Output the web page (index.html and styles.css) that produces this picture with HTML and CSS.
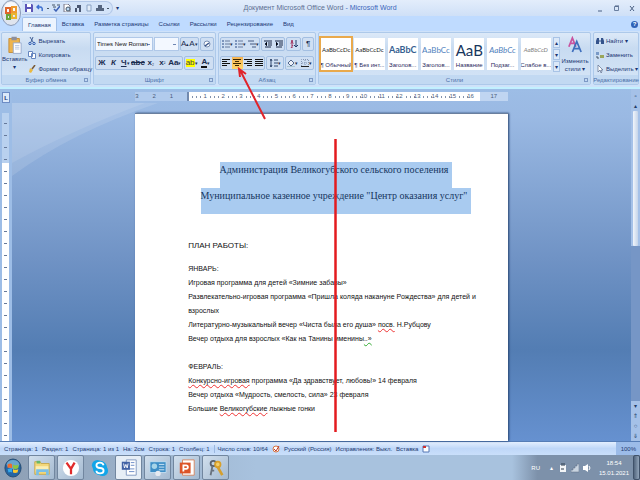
FILE: index.html
```
<!DOCTYPE html>
<html lang="ru">
<head>
<meta charset="utf-8">
<title>Документ Microsoft Office Word</title>
<link rel="stylesheet" href="styles.css">
</head>
<body>
<header class="titlebar">
  <div class="quick">
    <button aria-label="Сохранить"><svg viewBox="0 0 8 8"><path fill="#5b55b8" d="M0 0h7l1 1v7H0z"/><path fill="#fff" d="M2 0h4v3H2zM2 5h4v3H2z"/></svg></button>
    <button aria-label="Отменить"><svg viewBox="0 0 8 8"><path d="M1 3h3q3 0 2 4M3 1 1 3l2 2" fill="none" stroke="#3c6fd0" stroke-width="1.5"/></svg></button>
    <i class="dot"></i>
    <button aria-label="Орфография"><svg viewBox="0 0 8 8"><path d="M0 1h3M1 3h3M5 1h3" stroke="#456" /><path d="m2 5 2 2 4-5" fill="none" stroke="#3d62b5" stroke-width="1.5"/></svg></button>
    <button aria-label="Просмотр"><svg viewBox="0 0 8 8"><path d="M1 0h4l2 2v6H1z" fill="#fff" stroke="#778"/><circle cx="5" cy="5" r="2" fill="#bcd8f4" stroke="#456"/></svg></button>
    <button aria-label="Найти"><svg viewBox="0 0 8 8"><path d="M1 4h2v4H1zM5 4h2v4H5zM3 1h4v3H3z" fill="#4a5772"/></svg></button>
    <button aria-label="Создать"><svg viewBox="0 0 8 8"><path d="M2 1h4v6H2z" fill="#e4edf8" stroke="#8ba3c4"/></svg></button>
    <button aria-label="Печать"><svg viewBox="0 0 8 8"><path d="M0 4h8v3H0zM2 1h4v3H2z" fill="#55657f"/></svg></button>
    <i class="dot"></i>
  </div>
  <span class="more">▾</span>
  <h1>Документ Microsoft Office Word <b>- Microsoft Word</b></h1>
  <div class="window">
    <button aria-label="Свернуть"><svg viewBox="0 0 8 8"><path d="M2 7h4" stroke="#4b6184"/></svg></button>
    <button aria-label="Восстановить"><svg viewBox="0 0 8 8"><path d="M2.5 2.5h4v4h-4z" fill="none" stroke="#6a7fa0"/><path d="M3 2h4" stroke="#4b6184"/></svg></button>
    <button aria-label="Закрыть"><svg viewBox="0 0 8 8"><path d="m2 2 4 5M6 2 2 7" stroke="#4b6184"/></svg></button>
  </div>
</header>
<button class="orb" aria-label="Кнопка Office"><svg viewBox="0 0 20 26"><ellipse cx="10" cy="13" rx="9.500" ry="12.500" fill="#dfe4ee" stroke="#8898b4"/><ellipse cx="10" cy="9" rx="7" ry="7" fill="#f8f9fc"/><path d="M5 8h4v5H5z" fill="none" stroke="#e0662c" stroke-width="2"/><path d="M11 7h4v5h-4z" fill="none" stroke="#ef9b30" stroke-width="2"/><path d="M6 15h3v4H6z" fill="none" stroke="#6ba63c" stroke-width="2"/><path d="M11 14h4v4h-4z" fill="none" stroke="#e9b52e" stroke-width="2"/></svg></button>
<nav class="tabs">
  <button class="on">Главная</button><button>Вставка</button><button>Разметка страницы</button><button>Ссылки</button><button>Рассылки</button><button>Рецензирование</button><button>Вид</button>
  <button class="help" aria-label="Справка">?</button>
</nav>
<section class="ribbon">
  <div class="group clip">
    <div class="body">
      <button class="paste"><svg viewBox="0 0 16 20"><path d="M1 2h12v16H1z" fill="#eeb44e" stroke="#c48a34"/><path d="M4 0h6v4H4z" fill="#8d8f9c"/><path d="M6 7h9v12H6z" fill="#fdfdff" stroke="#92a6ca"/><path d="M8 10h5M8 12h5M8 14h5" stroke="#b2c4e0"/></svg><span>Вставить</span><span>▾</span></button>
      <div class="list">
        <button><svg viewBox="0 0 8 8"><path d="m2 0 3 5M5 0 3 5" stroke="#45639a"/><circle cx="2" cy="6.500" r="1.200" fill="none" stroke="#2f5bb0"/><circle cx="6" cy="6.500" r="1.200" fill="none" stroke="#2f5bb0"/></svg>Вырезать</button>
        <button><svg viewBox="0 0 8 8"><path d="M.5.5h4v5h-4zM3.500 2.500h4v5h-4z" fill="#fff" stroke="#6585bf"/></svg>Копировать</button>
        <button><svg viewBox="0 0 8 8"><path d="m1 7 1-4 3 2-2 3z" fill="#eab93f"/><path d="m4 4 3-4" stroke="#7a5a35" stroke-width="1.500"/></svg>Формат по образцу</button>
      </div>
    </div>
    <footer>Буфер обмена<i></i></footer>
  </div>
  <div class="group font">
    <div class="body rows">
      <div class="row">
        <select class="face" aria-label="Шрифт"><option>Times New Roman</option></select>
        <select class="size" aria-label="Размер шрифта"><option></option></select>
        <div class="set"><button class="big">A<sup>▴</sup></button><button>A<sup>▾</sup></button></div>
        <div class="set"><button aria-label="Очистить формат"><svg viewBox="0 0 8 8"><circle cx="4" cy="4" r="3" fill="#fff" stroke="#7a8fb4"/><path d="m2 6 4-3" stroke="#39558b" stroke-width="1.500"/></svg></button></div>
      </div>
      <div class="row">
        <div class="set wide"><button><b>Ж</b></button><button><b><em>К</em></b></button><button><b><u>Ч</u></b><small>▾</small></button><button><b><s>abc</s></b></button><button><b>x</b><sub>₂</sub></button><button><b>x</b><sup>²</sup></button><button><b>Aa</b><small>▾</small></button></div>
        <div class="set marks"><button><span class="hl">ab</span><small>▾</small></button><button><b class="ink">A</b><small>▾</small></button></div>
      </div>
    </div>
    <footer>Шрифт<i></i></footer>
  </div>
  <div class="group para">
    <div class="body rows">
      <div class="row">
        <div class="set"><button aria-label="Маркеры"><svg viewBox="0 0 8 8"><path d="M0 1h2M0 4h2M0 7h2" stroke="#2b4a85"/><path d="M3 1h5M3 4h5M3 7h5" stroke="#667b9e"/></svg><small>▾</small></button><button aria-label="Нумерация"><svg viewBox="0 0 8 8"><path d="M1 0v2M1 3v2M1 6v2" stroke="#2b4a85"/><path d="M3 1h5M3 4h5M3 7h5" stroke="#667b9e"/></svg><small>▾</small></button><button aria-label="Многоуровневый список"><svg viewBox="0 0 8 8"><path d="M0 1h6M2 4h6M4 7h4" stroke="#465b82"/></svg><small>▾</small></button></div>
        <div class="set"><button aria-label="Уменьшить отступ"><svg viewBox="0 0 8 8"><path d="M0 1h8M4 3h4M4 5h4M1 7h6M3 2 1 4l2 2" stroke="#1c2b48"/></svg></button><button aria-label="Увеличить отступ"><svg viewBox="0 0 8 8"><path d="M0 1h8M4 3h4M4 5h4M1 7h6M1 2l2 2-2 2" stroke="#1c2b48"/></svg></button></div>
        <div class="set"><button aria-label="Сортировка"><svg viewBox="0 0 8 8"><path d="m1 4 1-4 1 4M1 5h2L1 8h2" fill="none" stroke="#a3325c"/><path d="M6 0v7M4 5l2 2 2-2" fill="none" stroke="#243b68"/></svg></button></div>
        <div class="set"><button>¶</button></div>
      </div>
      <div class="row">
        <div class="set aligns"><button aria-label="По левому краю"><svg viewBox="0 0 8 8"><path d="M0 .5h8M0 2.500h5M0 4.500h8M0 6.500h5" stroke="#111"/></svg></button><button class="active" aria-label="По центру"><svg viewBox="0 0 8 8"><path d="M0 .5h8M2 2.500h4M0 4.500h8M2 6.500h4" stroke="#3a2600"/></svg></button><button aria-label="По правому краю"><svg viewBox="0 0 8 8"><path d="M0 .5h8M3 2.500h5M0 4.500h8M3 6.500h5" stroke="#111"/></svg></button><button aria-label="По ширине"><svg viewBox="0 0 8 8"><path d="M0 .5h8M0 2.500h8M0 4.500h8M0 6.500h8" stroke="#111"/></svg></button></div>
        <div class="set"><button aria-label="Интервал"><svg viewBox="0 0 8 8"><path d="M1 0v8M0 2l1-2 1 2M0 6l1 2 1-2M4 1h4M4 4h4M4 7h4" fill="none" stroke="#33496f"/></svg><small>▾</small></button></div>
        <div class="set"><button aria-label="Заливка"><svg viewBox="0 0 8 8"><path d="m1 4 3-3 3 3-3 3z" fill="#eef2f9" stroke="#52678c"/><path d="M0 8h8" stroke="#8aa" /></svg><small>▾</small></button><button aria-label="Границы"><svg viewBox="0 0 8 8"><path d="M.5 7V.5h7V7M4 1v6M1 4h6" fill="none" stroke="#8496b5" stroke-dasharray="1"/><path d="M0 7.500h8" stroke="#222"/></svg><small>▾</small></button></div>
      </div>
    </div>
    <footer>Абзац<i></i></footer>
  </div>
  <div class="group styles">
    <div class="body">
      <div class="gallery">
        <button class="sel"><span class="t1">AaBbCcDc</span><span>¶ Обычный</span></button>
        <button><span class="t1">AaBbCcDc</span><span>¶ Без инт...</span></button>
        <button><span class="t3">AaBbC</span><span>Заголов...</span></button>
        <button><span class="t4">AaBbCc</span><span>Заголов...</span></button>
        <button><span class="t5">AaB</span><span>Название</span></button>
        <button><span class="t6">AaBbCc</span><span>Подзаг...</span></button>
        <button><span class="t7">AaBbCcD</span><span>Слабое в...</span></button>
      </div>
      <div class="scroll"><button aria-label="Вверх">▴</button><button aria-label="Вниз">▾</button><button aria-label="Ещё">▾</button></div>
      <button class="change"><svg viewBox="0 0 16 18"><path d="m1 11 4-10 4 10M3 7h5" fill="none" stroke="#c8539f" stroke-width="2"/><path d="m5 17 5-12 5 12M7 13h6" fill="none" stroke="#3f6fbd" stroke-width="2"/></svg><span>Изменить<br>стили ▾</span></button>
    </div>
    <footer>Стили<i></i></footer>
  </div>
  <div class="group edit">
    <div class="body list">
      <button><svg viewBox="0 0 8 8"><path d="M0 4 1 1h2v6H0zM5 1h2l1 3v3H5z" fill="#34538c"/><path d="M3 4h2" stroke="#34538c"/></svg>Найти ▾</button>
      <button><svg viewBox="0 0 8 8"><path d="M0 1h3v3H0z" fill="#799ac8"/><path d="M4 4h4v3H4z" fill="#9aa65b"/><path d="M1 5v2h2" fill="none" stroke="#456"/></svg>Заменить</button>
      <button><svg viewBox="0 0 8 8"><path d="M2 0v7l2-2 1 3 1-1-1-2h2z" fill="#fff" stroke="#5b6d8e" stroke-width=".7"/></svg>Выделить ▾</button>
    </div>
    <footer>Редактирование</footer>
  </div>
</section>
<main class="workspace">
  <svg class="swoosh" viewBox="0 0 640 352" preserveAspectRatio="none"><path d="M12 73Q70 30 158 0H12z" fill="#fff" opacity=".12"/><path d="M12 60Q70 28 145 0H12z" fill="#fff" opacity=".1"/></svg>
  <aside class="left"><button class="tabstop" aria-label="Табуляция">L</button><div class="vruler"></div></aside>
  <div class="desk">
    <div class="hruler">
      <div class="neg"><span>3</span><span>2</span><span>1</span></div>
      <div class="pos"><span>1</span><span>2</span><span>3</span><span>4</span><span>5</span><span>6</span><span>7</span><span>8</span><span>9</span><span>10</span><span>11</span><span>12</span><span>13</span><span>14</span><span>15</span><span>16</span></div>
      <div class="end"><span>17</span></div>
    </div>
    <article class="page">
      <h2><span>Администрация Великогубского сельского поселения</span></h2>
      <h2><span>Муниципальное казенное учреждение "Центр оказания услуг"</span></h2>
      <h3>ПЛАН РАБОТЫ:</h3>
      <p>ЯНВАРЬ:</p>
      <p>Игровая программа для детей «Зимние забавы»</p>
      <p>Развлекательно-игровая программа «Пришла коляда накануне Рождества» для детей и<br>взрослых</p>
      <p>Литературно-музыкальный вечер «Чиста была его душа» <u>посв.</u> Н.Рубцову</p>
      <p>Вечер отдыха для взрослых «Как на Танины именины<u class="gr">..»</u></p>
      <p class="gap">ФЕВРАЛЬ:</p>
      <p><u>Конкурсно-игровая</u> программа «Да здравствует, любовь!» 14 февраля</p>
      <p>Вечер отдыха «Мудрость, смелость, сила» 23 февраля</p>
      <p>Большие <u>Великогубские</u> лыжные гонки</p>
    </article>
  </div>
  <aside class="vscroll"><button aria-label="Линейка">▫</button><button aria-label="Вверх">▴</button><div class="thumb"></div><div class="track"></div><button aria-label="Вниз">▾</button><button aria-label="Предыдущая">⇑</button><button aria-label="Объект">○</button><button aria-label="Следующая">⇓</button></aside>
</main>
<div class="status">
  <span>Страница: 1</span><span>Раздел: 1</span><span>Страница: 1 из 1</span><span>На: 2см</span><span>Строка: 1</span><span>Столбец: 1</span><span class="bar">Число слов: 10/64</span>
  <svg viewBox="0 0 8 8"><circle cx="4" cy="4" r="3" fill="#fff" stroke="#d8743e"/><path d="m2 4 2 2 3-5" fill="none" stroke="#b8382c"/></svg>
  <span>Русский (Россия)</span><span>Исправления: Выкл.</span><span>Вставка</span>
  <svg viewBox="0 0 8 8"><path d="M1 1h6v6H1z" fill="#fff" stroke="#5576b4"/><path d="M1 1h3v2H1z" fill="#c33"/></svg>
  <span class="zoom">100%</span>
</div>
<footer class="taskbar">
  <button class="start" aria-label="Пуск"><svg viewBox="0 0 20 22"><ellipse cx="10" cy="11" rx="9" ry="10" fill="#2465a3" stroke="#25496e"/><ellipse cx="10" cy="7" rx="7" ry="5" fill="#68a5ce"/><path d="M4 7q3-2 5 0v4q-3-1-5 0z" fill="#ee6b2d"/><path d="M10 7q3 2 6 0v4q-3 2-6 0z" fill="#8dc63f"/><path d="M4 12q3-1 5 0v4q-2-1-4 0z" fill="#35a9ea"/><path d="M10 12q3 2 6 0l-1 4q-3 1-5 0z" fill="#fbc92f"/></svg></button>
  <button aria-label="Проводник"><svg viewBox="0 0 20 20"><path d="M2 3h6l1 2h9v12H2z" fill="#f3d779" stroke="#c5a64c"/><path d="M4 2h4v3H4z" fill="#67b768"/><path d="M3 8h14v6H3z" fill="#fbeeb3"/><path d="M5 18v-5h11v5" fill="none" stroke="#79bfe6" stroke-width="3"/></svg></button>
  <button aria-label="Яндекс Браузер"><svg viewBox="0 0 20 20"><circle cx="10" cy="10" r="9" fill="#fff"/><path d="m5 4 5 7 4-7M10 10v7" fill="none" stroke="#e02b2b" stroke-width="2.500"/></svg></button>
  <button class="flat" aria-label="Skype"><svg viewBox="0 0 20 20"><circle cx="7" cy="7" r="6" fill="#12a5e8"/><circle cx="13" cy="13" r="6" fill="#12a5e8"/><circle cx="10" cy="10" r="8" fill="#12a5e8"/><path d="M14 7q-1-3-4-3-4 0-4 3t4 3 4 3-4 3-4-3" fill="none" stroke="#fff" stroke-width="2"/></svg></button>
  <button class="cur" aria-label="Word"><svg viewBox="0 0 20 20"><path d="M7 1h11v17H7z" fill="#fff" stroke="#7c93bd"/><path d="M10 11h6M10 14h6M12 4h4M12 7h4" stroke="#6386c4"/><path d="M2 3h9v9H2z" fill="#4161a4"/><path d="m4 5 1 5 1.500-4L8 10l1-5" fill="none" stroke="#fff"/></svg></button>
  <button aria-label="Панель управления"><svg viewBox="0 0 20 20"><path d="M1 3h18v12H1z" fill="#3e8ec6" stroke="#c4dff1"/><circle cx="6" cy="8" r="3" fill="#a6d4e8"/><path d="M11 6h6M11 9h6M11 12h6" stroke="#d9ecf7"/><circle cx="10" cy="16" r="3" fill="#e6eaf0"/></svg></button>
  <button aria-label="PowerPoint"><svg viewBox="0 0 20 20"><path d="M5 1h13v17H5z" fill="#fff" stroke="#d5835c"/><path d="M2 4h12v12H2z" fill="#dc5428"/><path d="M6 14V7h3q2 0 2 2t-2 2H6" fill="none" stroke="#fff" stroke-width="2"/></svg></button>
  <button aria-label="Ключи"><svg viewBox="0 0 20 20"><circle cx="7" cy="5" r="3" fill="none" stroke="#59616d" stroke-width="2"/><path d="m6 8-2 10M5 13h3" stroke="#69727e" stroke-width="2"/><circle cx="12" cy="6" r="3" fill="#f3cf6c" stroke="#d8a02c" stroke-width="2"/><path d="m12 9 5 9" stroke="#d59f2e" stroke-width="3"/></svg></button>
  <div class="tray">
    <span>RU</span><span class="up">▴</span>
    <svg viewBox="0 0 8 10"><path d="M1 2h6v7H1z" fill="#f3f5f7"/><path d="M3 0v3M5 0v3M2 6h3" stroke="#2e3c4c"/></svg>
    <svg viewBox="0 0 8 10"><path d="M0 9V7h2V5h2V3h2V1h2v8z" fill="#c9d4e0" stroke="#5d6e84" stroke-width=".5"/></svg>
    <svg viewBox="0 0 8 10"><path d="M0 3h2l3-2v8L2 7H0z" fill="#fff"/><path d="M6 3q2 2 0 4" fill="none" stroke="#fff"/></svg>
    <time>18:54<br>15.01.2021</time>
  </div>
  <button class="show" aria-label="Показать рабочий стол"></button>
</footer>
<svg class="notes" viewBox="0 0 640 480"><path d="m265 119-25-49M240 77l-1-8 7 5" fill="none" stroke="#e0242b" stroke-width="2"/><path d="M335.500 139v293" stroke="#e31b1f" stroke-width="2.500"/></svg>
</body>
</html>
```
FILE: styles.css
```
* { box-sizing: border-box; }
body {
  margin: 0;
  min-height: 100vh;
  display: flex;
  flex-direction: column;
  position: relative;
  overflow: hidden;
  font: 6px/8px "Liberation Sans", sans-serif;
  color: #1a3672;
  background: #bfdbff;
}
button, select {
  font: inherit;
  color: inherit;
  border: 0;
  padding: 0;
  margin: 0;
  background: none;
  appearance: none;
  white-space: nowrap;
}
svg { display: block; width: 8px; height: 8px; flex: none; }
small, sup, sub { font-size: 5px; line-height: 4px; }

.titlebar {
  height: 16px;
  display: flex;
  align-items: center;
  padding: 0 4px 0 22px;
  background: linear-gradient(#e3edfb, #cfe0f7);
}
.quick {
  display: flex;
  align-items: center;
  gap: 3px;
  height: 14px;
  padding: 0 3px 0 3px;
  border: 1px solid #b3c8e8;
  border-left: 0;
  border-radius: 0 7px 7px 0;
  background: #d3e3f8;
}
.dot { width: 2px; height: 1px; background: #456; }
.more { margin-left: 3px; }
.titlebar h1 {
  flex: 1;
  margin: 0;
  padding-right: 75px;
  text-align: center;
  font-size: 7px;
  font-weight: 400;
  color: #5d6f92;
}
.titlebar b { font-weight: 400; color: #3a66bb; }
.window { display: flex; gap: 8px; }

.orb { position: absolute; left: 1px; top: 0; }
.orb svg { width: 20px; height: 26px; }

.tabs {
  height: 15px;
  display: flex;
  padding: 1px 2px 0 22px;
}
.tabs button { padding: 0 5px; }
.tabs .on {
  border: 1px solid #a3c0e8;
  border-bottom: 0;
  border-radius: 2px 2px 0 0;
  background: #ecf4fe;
}
.tabs .help {
  margin: 4px 0 0 auto;
  padding: 0;
  width: 7px;
  height: 7px;
  border-radius: 4px;
  font-weight: 700;
  line-height: 7px;
  color: #fff;
  background: #2e62b8;
}

.ribbon {
  height: 58px;
  display: flex;
  gap: 2px;
  padding: 1px 1px 2px;
  background: #cfe2f9;
  border-bottom: 2px solid #c2f0ff;
}
.group {
  display: flex;
  flex-direction: column;
  flex: none;
  min-width: 0;
  border: 1px solid #adc9ea;
  border-radius: 2px;
  background: linear-gradient(#dce9f8, #c8dbf1 30%, #d5e5f7);
}
.clip { width: 90px; }
.font { width: 123px; }
.para { width: 98px; }
.styles { flex: 1; }
.edit { width: 46px; }
.body { flex: 1; display: flex; min-height: 0; }
.group footer {
  height: 9px;
  display: flex;
  justify-content: center;
  align-items: center;
  position: relative;
  color: #4a6fa9;
  background: #c2d9f2;
}
.group footer i {
  position: absolute;
  right: 2px;
  width: 4px;
  height: 4px;
  border: 1px solid #7d99c5;
}
.paste, .change {
  display: flex;
  flex-direction: column;
  align-items: center;
  width: 26px;
  padding-top: 3px;
}
.paste svg { width: 14px; height: 19px; }
.list { display: flex; flex-direction: column; gap: 6px; padding: 4px 0 0 1px; }
.list button { display: flex; gap: 2px; align-items: center; }
.edit .list { padding-left: 2px; }

.rows { flex-direction: column; gap: 5px; padding: 4px 1px 0; }
.row { display: flex; height: 14px; gap: 1px; }
.face, .size {
  height: 14px;
  border: 1px solid #b0c8e8;
  padding: 0 1px;
  color: #111;
  background: linear-gradient(#6d86b3, #6d86b3) right 2px center / 3px 1px no-repeat, #f3f8ff;
}
.face { width: 58px; }
.size { width: 25px; }
.set {
  display: flex;
  flex: 1;
  justify-content: space-around;
  align-items: center;
  border: 1px solid #a3bfe2;
  border-radius: 2px;
  background: #cfdff3;
  color: #1b2d50;
  font-size: 8px;
}
.set button { display: flex; align-items: center; justify-content: center; flex: 1; height: 12px; }
.set.wide { flex: 3; }
.para .set { flex: auto; }
.para .set.aligns { flex: none; width: 45px; }
.para .active { background: linear-gradient(#f6b555, #ffd568); }
.hl { background: #ff0; color: #444; }
.ink { border-bottom: 2px solid #111; line-height: 8px; }

.gallery { display: flex; flex: 1; min-width: 0; gap: 3px; padding: 5px 2px 3px 2px; }
.gallery button {
  flex: 1 1 0;
  min-width: 0;
  overflow: hidden;
  display: flex;
  flex-direction: column;
  justify-content: space-between;
  align-items: center;
  height: 32px;
  padding: 4px 0 1px;
  color: #29295c;
  background: #fff;
}
.gallery .sel { outline: 2px solid #e9a94b; }
.gallery button span:first-child { height: 16px; line-height: 16px; font-family: Lato, sans-serif; }
.gallery .t1 { color: #222; }
.gallery .t3 { font-size: 9px; font-weight: 700; color: #365f91; }
.gallery .t4 { font-size: 8px; color: #4f81bd; }
.gallery .t5 { font-size: 15px; color: #17365d; }
.gallery .t6 { font-size: 8px; font-style: italic; color: #4f81bd; }
.gallery .t7 { font-size: 6px; font-style: italic; color: #808080; }
.scroll { display: flex; flex-direction: column; gap: 1px; padding: 4px 0 3px; }
.scroll button { flex: 1; width: 7px; border: 1px solid #a8c3e6; background: #dbe8f8; line-height: 6px; }
.change svg { width: 14px; height: 18px; margin-bottom: 3px; }
.change { width: 30px; }

.workspace {
  flex: 1;
  display: flex;
  position: relative;
  background: linear-gradient(#9dbde6, #9ab9e3 8%, #7093c5 48%, #537db3 74%, #6691d0);
}
.swoosh { position: absolute; inset: 14px 0 0; width: 100%; height: 100%; }
.left { width: 12px; position: relative; display: flex; flex-direction: column; gap: 10px; padding: 3px 2px 0; background: #9dbde6; }
.tabstop { height: 11px; border: 1px solid #6d8cc5; background: #dce9fa; font-weight: 700; line-height: 8px; }
.vruler {
  flex: 1;
  width: 7px;
  background:
    repeating-linear-gradient(transparent 0 10px, #66799a 10px 11px, transparent 11px 12px) center / 3px 100% no-repeat,
    linear-gradient(#b9d1ef 0 50px, #fff 50px);
}
.desk { flex: 1; position: relative; display: flex; flex-direction: column; align-items: center; }
.hruler {
  width: 60.2%;
  display: grid;
  grid-template-columns: minmax(0, 52fr) minmax(0, 293fr) minmax(0, 28fr);
  height: 9px;
  margin: 3px 0 12px;
  color: #4b5d7c;
  line-height: 9px;
}
.neg { display: flex; justify-content: space-between; padding-right: 14px; background: #b1cbed; }
.pos { display: flex; padding-right: 6px; background: #fff; border-left: 2px solid #7189ae; }
.pos span { flex: 1 1 0; min-width: 0; text-align: right; background: repeating-linear-gradient(90deg, transparent 0 3px, #8393ad 3px 4px) left center / 12px 2px no-repeat; }
.end { background: #c0d5f1; text-align: center; }
.page {
  flex: 1;
  width: 60.2%;
  padding: 48px 24px 20px 53px;
  background: #fff;
  border-top: 1px solid #6a7f9e;
  box-shadow: 1px 0 2px #25426e;
  color: #111;
  font-size: 7px;
  line-height: 14px;
}
.page h2 { margin: 0; text-align: center; font: 10px/16px "Liberation Serif", serif; color: #16365f; white-space: nowrap; }
.page h2 span { display: inline-block; padding: 0 4px 10px 0; background: #a9cbf0; vertical-align: top; }
.page h3 { margin: 25px 0 9px; font-size: 8px; font-weight: 400; line-height: 14px; }
.page p { margin: 0; white-space: nowrap; }
.page .gap { margin-top: 14px; }
.page u { text-decoration: underline wavy #e33 1px; }
.page .gr { text-decoration-color: #3a3; }
.vscroll { width: 9px; position: relative; display: flex; flex-direction: column; background: #a5c1e8; padding-top: 2px; }
.vscroll button { height: 10px; color: #223b66; }
.thumb { flex: 130; margin: 0 2px; border-radius: 1px; background: linear-gradient(90deg, #f1f5fb, #c5d4e9); }
.track { flex: 150; background: #7696c6; }

.status {
  height: 14px;
  display: flex;
  align-items: center;
  gap: 4px;
  padding-left: 4px;
  border-top: 1px solid #567db6;
  background: linear-gradient(#e3efff, #bfd7f8 50%, #c9dffb);
  color: #1e3a70;
  white-space: nowrap;
}
.status .bar { border-left: 1px solid #9bb8e0; padding-left: 3px; }
.status .zoom { margin-left: auto; padding: 3px 4px 3px 5px; background: #9cbce9; }

.taskbar { height: 25px; display: flex; gap: 2px; background: linear-gradient(90deg, #8d9fb4, #a8c2de 40%, #a8c2de 80%, #7d91aa 84%); }
.taskbar button { width: 27px; display: flex; align-items: center; justify-content: center; border: 1px solid #71869f; border-radius: 2px; background: linear-gradient(135deg, #d1dfed, #a3b9d0); }
.taskbar svg { width: 18px; height: 20px; }
.taskbar .start { width: 26px; border: 0; background: none; }
.taskbar .start svg { width: 18px; height: 22px; }
.taskbar .flat { border-color: transparent; background: none; }
.taskbar .cur { background: #e6eef6; }
.tray { margin-left: auto; display: flex; align-items: center; gap: 4px; color: #fff; }
.tray span:first-child { margin-right: 4px; }
.tray .up { padding: 0 2px; }
.tray svg { width: 8px; height: 10px; }
.tray time { margin: 0 2px 0 4px; text-align: center; line-height: 10px; }
.taskbar .show { width: 7px; border-color: #40526a; background: linear-gradient(90deg, #53667e, #91a4ba); }

.notes { position: absolute; left: 0; top: 0; width: 640px; height: 480px; pointer-events: none; }
```
